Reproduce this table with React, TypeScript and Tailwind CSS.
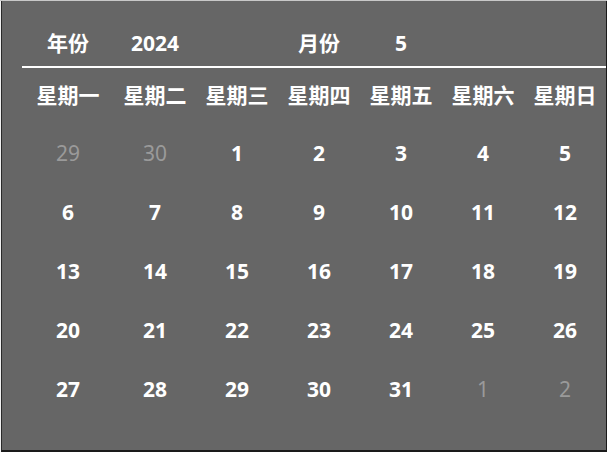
import { ReactNode } from "react";

type DayType = {
    day: number
    current: boolean
}

const weekdays: string[] = ["星期一", "星期二", "星期三", "星期四", "星期五", "星期六", "星期日"]

// May 2024 starts on a Wednesday
const buildDays = (): DayType[] => {
    const days: DayType[] = [{ day: 29, current: false }, { day: 30, current: false }]
    for (let i = 1; i <= 31; i++) days.push({ day: i, current: true })
    days.push({ day: 1, current: false }, { day: 2, current: false })
    return days
}

export default function App(): ReactNode {
    const days = buildDays()
    const rows: DayType[][] = []
    for (let i = 0; i < days.length; i += 7) rows.push(days.slice(i, i + 7))

    return (
        <div className="w-[607px] h-[452px] bg-[#f0f0f0] border-t border-t-[#c8c8c8] pl-px flex">
            <div
                className="flex-1 bg-[#666666] border-l border-l-[#2a2a2a] border-r-2 border-r-[#1a1a1a] border-b-2 border-b-[#1a1a1a] pt-[21px] pl-[20px] font-bold text-white text-[21px]"
                style={{ fontFamily: '"Noto Sans", "Noto Sans CJK SC", sans-serif' }}
            >
                <div className="grid grid-cols-[92px_repeat(6,82px)] h-[44px] items-center text-center">
                    <div>年份</div>
                    <div>2024</div>
                    <div></div>
                    <div>月份</div>
                    <div>5</div>
                    <div></div>
                    <div></div>
                </div>
                <div className="h-[2px] bg-white"></div>
                <div className="grid grid-cols-[92px_repeat(6,82px)] h-[56px] items-center text-center">
                    {weekdays.map(w => (
                        <div key={w}>{w}</div>
                    ))}
                </div>
                {rows.map((row, ri) => (
                    <div key={ri} className="grid grid-cols-[92px_repeat(6,82px)] h-[59px] items-center text-center">
                        {row.map((d, di) => (
                            <div key={di} className={d.current ? "text-white" : "text-[#9a9a9a] font-normal"}>
                                {d.day}
                            </div>
                        ))}
                    </div>
                ))}
            </div>
        </div>
    );
}
